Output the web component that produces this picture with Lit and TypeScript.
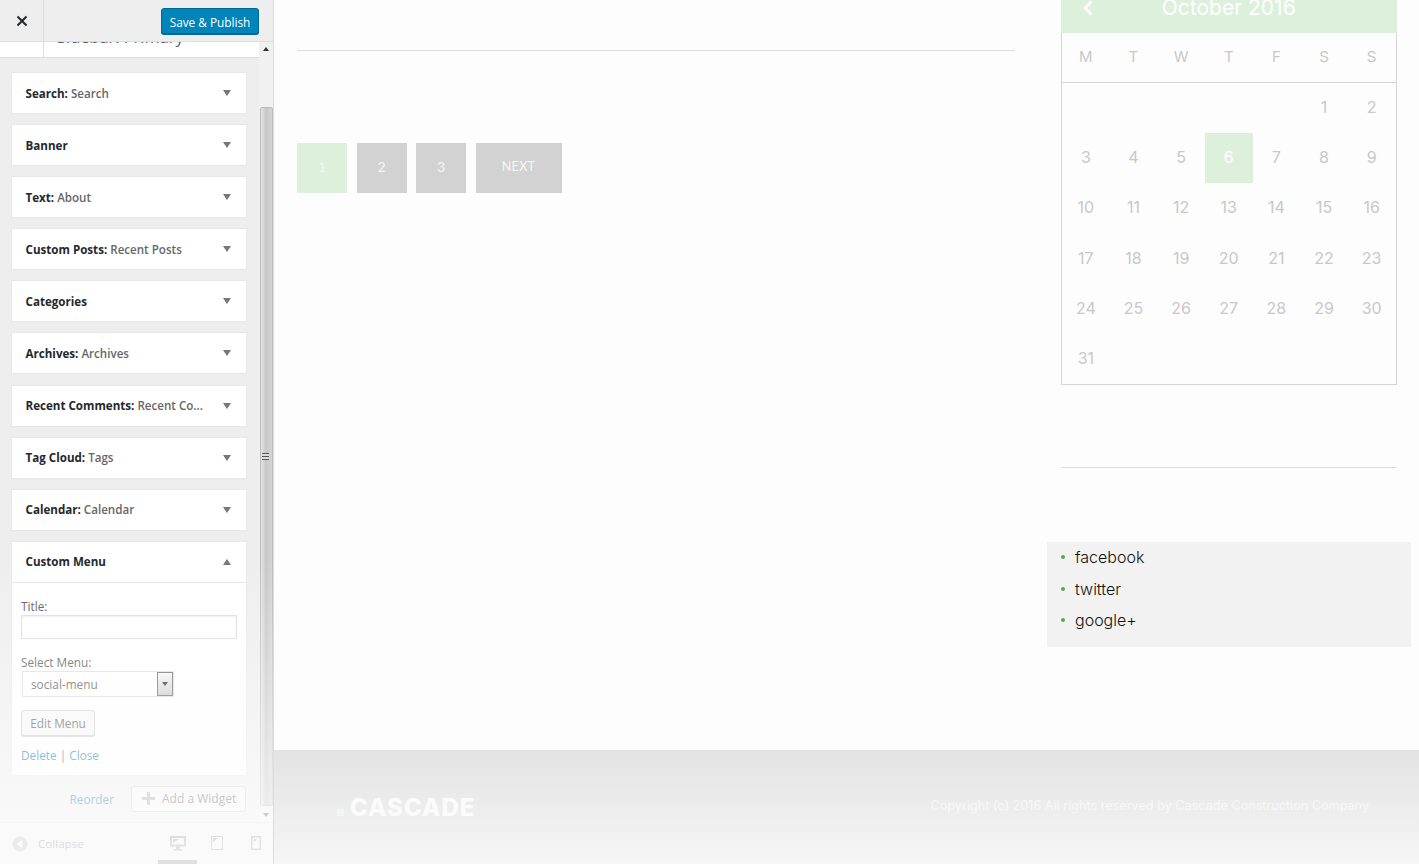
import {html, css, LitElement} from 'lit';
import {customElement} from 'lit/decorators.js';

const WIDGETS: [string, string][] = [
    ['Search', 'Search'],
    ['Banner', ''],
    ['Text', 'About'],
    ['Custom Posts', 'Recent Posts'],
    ['Categories', ''],
    ['Archives', 'Archives'],
    ['Recent Comments', 'Recent Co...'],
    ['Tag Cloud', 'Tags'],
    ['Calendar', 'Calendar'],
];

const WEEKDAYS = ['M', 'T', 'W', 'T', 'F', 'S', 'S'];

@customElement('app-root')
export class AppRoot extends LitElement {
    renderWidget([name, title]: [string, string]) {
        return html`
            <div class="widget">
                <div class="widget-head">
                    <span class="widget-name">${name}${title ? html`: <span class="widget-title">${title}</span>` : ''}</span>
                    <span class="caret down"></span>
                </div>
            </div>
        `;
    }

    renderMenuWidget() {
        return html`
            <div class="widget">
                <div class="widget-head open">
                    <span class="widget-name">Custom Menu</span>
                    <span class="caret up"></span>
                </div>
                <div class="widget-form">
                    <div class="label">Title:</div>
                    <div class="input"></div>
                    <div class="label select-label">Select Menu:</div>
                    <div class="select">
                        <span class="select-value">social-menu</span>
                        <span class="select-arrow"><span class="caret tiny"></span></span>
                    </div>
                    <div class="edit-btn">Edit Menu</div>
                    <div class="form-links"><span class="link">Delete</span> | <span class="link">Close</span></div>
                </div>
            </div>
        `;
    }

    renderSidebar() {
        return html`
            <aside class="sidebar">
                <header class="side-head">
                    <div class="close">
                        <svg width="12" height="12" viewBox="0 0 12 12"><path d="M1.5 1.5l9 9M10.5 1.5l-9 9" stroke="#23282d" stroke-width="2" fill="none"/></svg>
                    </div>
                    <div class="save">Save &amp; Publish</div>
                </header>
                <div class="side-mid">
                    <div class="side-list">
                        <div class="stub">
                            <div class="stub-back"></div>
                            <div class="stub-title">Sidebar: Primary</div>
                        </div>
                        <div class="widgets">
                            ${WIDGETS.map((w) => this.renderWidget(w))}
                            ${this.renderMenuWidget()}
                        </div>
                        <div class="actions">
                            <span class="reorder">Reorder</span>
                            <div class="add">
                                <svg width="13" height="13" viewBox="0 0 13 13"><path d="M6.5 0v13M0 6.5h13" stroke="#a0a5aa" stroke-width="3" fill="none"/></svg>
                                Add a Widget
                            </div>
                        </div>
                    </div>
                    <div class="scrollbar">
                        <span class="sb-arrow sb-up"></span>
                        <div class="sb-thumb">
                            <span class="grip"></span>
                        </div>
                        <span class="sb-arrow sb-down"></span>
                    </div>
                </div>
                <footer class="side-foot">
                    <svg class="collapse-icon" width="16" height="16" viewBox="0 0 16 16"><circle cx="8" cy="8" r="7.5" fill="#a0a5aa"/><path d="M10.5 3.8v8.4L4.5 8z" fill="#fff"/></svg>
                    <span class="collapse">Collapse</span>
                    <div class="devices">
                        <div class="device active">
                            <svg width="16" height="16" viewBox="0 0 16 16"><path d="M0 1h16v10.500H0zM2 3v6.500h12V3zM6 11.500h4V14h2.500v1.500h-9V14H6z" fill="#72777c" fill-rule="evenodd"/><path d="M3 8V4h6z" fill="#72777c"/></svg>
                        </div>
                        <div class="device">
                            <svg width="14" height="16" viewBox="0 0 14 16"><path d="M1 1h12v14H1zM2 2v12h10V2z" fill="#72777c" fill-rule="evenodd"/><path d="M3 7V3h5z" fill="#72777c"/></svg>
                        </div>
                        <div class="device">
                            <svg width="10" height="16" viewBox="0 0 10 16"><path d="M0 1h10v14H0zM1.500 2.500v11h7v-11z" fill="#72777c" fill-rule="evenodd"/><path d="M3 7V4h3z" fill="#72777c"/></svg>
                        </div>
                    </div>
                </footer>
                <div class="fade"></div>
            </aside>
        `;
    }

    renderCalendar() {
        const cells: (number | null)[] = [null, null, null, null, null];
        for (let d = 1; d <= 31; d++) cells.push(d);
        return html`
            <div class="cal">
                <div class="cal-head">
                    <svg class="cal-prev" width="10" height="16" viewBox="0 0 10 16"><path d="M8.500 1.500L2 8l6.500 6.500" stroke="#fff" stroke-width="2.500" fill="none"/></svg>
                    <span>October 2016</span>
                </div>
                <div class="cal-week">${WEEKDAYS.map((d) => html`<span>${d}</span>`)}</div>
                <div class="cal-days">
                    ${cells.map((d) => html`<span class=${d === 6 ? 'today' : ''}>${d ?? ''}</span>`)}
                </div>
            </div>
        `;
    }

    render() {
        return html`
            ${this.renderSidebar()}
            <main class="main">
                <div class="content">
                    <section class="posts">
                        <div class="rule"></div>
                        <nav class="pager">
                            <span class="page current">1</span>
                            <span class="page">2</span>
                            <span class="page">3</span>
                            <span class="page next">NEXT</span>
                        </nav>
                    </section>
                    <section class="rail">
                        <div class="rail-inner">
                            ${this.renderCalendar()}
                            <div class="rule rail-rule"></div>
                        </div>
                        <ul class="social">
                            <li>facebook</li>
                            <li>twitter</li>
                            <li>google+</li>
                        </ul>
                    </section>
                </div>
                <footer class="foot">
                    <div class="logo"><span class="logo-dot"></span>CASCADE</div>
                    <div class="copy">Copyright (c) 2016 All rights reserved by Cascade Construction Company</div>
                </footer>
            </main>
        `;
    }

    static styles = [
        css`
            :host {
                display: grid;
                grid-template-columns: 274px 1fr;
                width: 100%;
                height: 864px;
                overflow: hidden;
                background: #fdfdfd;
                font-family: "Open Sans", sans-serif;
            }

            .sidebar {
                position: relative;
                display: flex;
                flex-direction: column;
                height: 864px;
                background: #eee;
                border-right: 1px solid #ddd;
                box-sizing: border-box;
                overflow: hidden;
            }

            .fade {
                position: absolute;
                left: 0;
                right: 0;
                top: 560px;
                bottom: 0;
                background: linear-gradient(rgba(253, 253, 253, 0), rgba(253, 253, 253, 0.85));
                pointer-events: none;
            }

            .side-head {
                flex: none;
                display: flex;
                align-items: center;
                justify-content: space-between;
                height: 42px;
                box-sizing: border-box;
                padding-right: 14px;
                background: #eee;
                border-bottom: 1px solid #ddd;
            }

            .close {
                display: flex;
                align-items: center;
                justify-content: center;
                width: 44px;
                height: 41px;
                box-sizing: border-box;
                border-right: 1px solid #ddd;
            }

            .save {
                width: 98px;
                height: 26px;
                margin-top: 1px;
                box-sizing: border-box;
                border: 1px solid #006799;
                border-radius: 3px;
                background: #0085ba;
                box-shadow: 0 1px 0 #006799;
                color: #fff;
                font-size: 11.8px;
                line-height: 26px;
                text-align: center;
            }

            .side-mid {
                flex: 1;
                display: flex;
                min-height: 0;
            }

            .side-list {
                flex: 1;
                min-width: 0;
            }

            .stub {
                display: flex;
                height: 15px;
                background: #fff;
                border-bottom: 1px solid #ddd;
                overflow: hidden;
            }

            .stub-back {
                flex: none;
                width: 43px;
                border-right: 1px solid #ddd;
            }

            .stub-title {
                margin-top: -17px;
                padding-left: 13px;
                color: #555d66;
                font-size: 16.4px;
                line-height: 24px;
                white-space: nowrap;
            }

            .widgets {
                display: flex;
                flex-direction: column;
                gap: 12.100px;
                padding: 15px 13px 0 12px;
            }

            .widget {
                background: #fff;
                box-shadow: 0 0 0 1px #e8e8e8, 0 1px 1px rgba(0, 0, 0, 0.06);
            }

            .widget-head {
                display: flex;
                align-items: center;
                justify-content: space-between;
                height: 40px;
                padding: 0 15px 0 13.500px;
            }

            .widget-head.open {
                border-bottom: 1px solid #e5e5e5;
            }

            .widget-name {
                color: #23282d;
                font-size: 11.6px;
                font-weight: 700;
                white-space: nowrap;
            }

            .widget-title {
                color: #666;
                font-weight: 600;
            }

            .caret {
                display: block;
                width: 0;
                height: 0;
                border-left: 4px solid transparent;
                border-right: 4px solid transparent;
            }

            .caret.down {
                border-top: 6px solid #72777c;
            }

            .caret.up {
                border-bottom: 6px solid #72777c;
            }

            .caret.tiny {
                border-left-width: 3px;
                border-right-width: 3px;
                border-top: 4px solid #222;
            }

            .widget-form {
                padding: 15px 9px 0;
                height: 192px;
                box-sizing: border-box;
                font-size: 11.8px;
                color: #555;
            }

            .label {
                line-height: 16px;
            }

            .input {
                height: 24px;
                margin-top: 1px;
                box-sizing: border-box;
                border: 1px solid #ddd;
                box-shadow: inset 0 1px 2px rgba(0, 0, 0, 0.07);
            }

            .select-label {
                margin-top: 15px;
            }

            .select {
                display: flex;
                justify-content: space-between;
                width: 152px;
                height: 26px;
                margin: 1px 0 0 1px;
                box-sizing: border-box;
                border: 1px solid #ddd;
            }

            .select-value {
                padding-left: 8px;
                line-height: 25px;
            }

            .select-arrow {
                display: flex;
                align-items: center;
                justify-content: center;
                width: 16px;
                height: 24px;
                box-sizing: border-box;
                border: 1px solid #666;
                background: linear-gradient(#f6f6f6, #c9c9c9);
            }

            .edit-btn {
                width: 74px;
                height: 26px;
                margin-top: 13px;
                box-sizing: border-box;
                border: 1px solid #ccc;
                border-radius: 3px;
                background: #f7f7f7;
                box-shadow: 0 1px 0 #ccc;
                line-height: 25px;
                text-align: center;
            }

            .form-links {
                margin-top: 11px;
                line-height: 16px;
            }

            .link {
                color: #0073aa;
            }

            .actions {
                display: flex;
                align-items: center;
                justify-content: flex-end;
                gap: 17px;
                padding: 11px 13px 0 0;
            }

            .reorder {
                color: #0073aa;
                font-size: 11.8px;
            }

            .add {
                display: flex;
                align-items: center;
                gap: 7px;
                width: 115px;
                height: 26px;
                padding-left: 10px;
                box-sizing: border-box;
                border: 1px solid #ccc;
                border-radius: 3px;
                background: #f7f7f7;
                color: #555;
                font-size: 12px;
            }

            .scrollbar {
                flex: none;
                display: flex;
                flex-direction: column;
                align-items: center;
                width: 14px;
                background: #f1f1f1;
            }

            .sb-arrow {
                flex: none;
                width: 0;
                height: 0;
                border-left: 3px solid transparent;
                border-right: 3px solid transparent;
            }

            .sb-up {
                margin-top: 5px;
                border-bottom: 4px solid #333;
            }

            .sb-down {
                margin-top: 7px;
                border-top: 4px solid #555;
            }

            .sb-thumb {
                display: flex;
                align-items: center;
                justify-content: center;
                width: 13px;
                height: 699px;
                margin-top: 56px;
                box-sizing: border-box;
                border: 1px solid #bbb;
                border-radius: 2px;
                background: linear-gradient(90deg, #e6e6e6, #c6c6c6 45%, #d6d6d6);
            }

            .grip {
                display: block;
                width: 7px;
                height: 7px;
                margin-left: -1px;
                background: repeating-linear-gradient(#555 0 1px, #ddd 1px 3px);
            }

            .side-foot {
                flex: none;
                display: flex;
                align-items: center;
                height: 42px;
                padding-left: 12px;
                box-sizing: border-box;
                border-top: 1px solid #ddd;
                background: #eee;
            }

            .collapse {
                margin-left: 10px;
                color: #555;
                font-size: 11.6px;
            }

            .devices {
                display: flex;
                align-items: flex-start;
                margin-left: auto;
                margin-right: -2px;
                height: 41px;
            }

            .device {
                display: flex;
                align-items: center;
                justify-content: center;
                width: 39px;
                height: 41px;
                box-sizing: border-box;
                border-bottom: 4px solid transparent;
                padding-top: 3px;
            }

            .device.active {
                border-bottom-color: #444;
            }

            .main {
                display: flex;
                flex-direction: column;
                height: 864px;
                min-width: 0;
            }

            .content {
                flex: 1;
                display: flex;
                justify-content: space-between;
            }

            .posts {
                width: 718px;
                margin-left: 23px;
                padding-top: 50px;
            }

            .rule {
                height: 1px;
                background: #dcdcdc;
            }

            .pager {
                display: flex;
                gap: 9.500px;
                margin-top: 92px;
            }

            .page {
                width: 50px;
                height: 50px;
                background: #d2d2d2;
                color: #f6f6f6;
                font-family: Lato, sans-serif;
                font-size: 14px;
                line-height: 47px;
                text-align: center;
            }

            .page.current {
                background: #ddf0dc;
            }

            .page.next {
                width: 86px;
                font-size: 12.5px;
                letter-spacing: 0.3px;
            }

            .rail {
                width: 364px;
                margin-right: 8px;
                font-family: Inter, sans-serif;
            }

            .rail-inner {
                padding: 0 14.500px 0 14px;
            }

            .cal {
                box-sizing: border-box;
                height: 385px;
                border: 1px solid #d4d4d4;
                border-top: 0;
            }

            .cal-head {
                position: relative;
                display: flex;
                align-items: flex-end;
                justify-content: center;
                height: 33px;
                margin: 0 -1px;
                padding-bottom: 14px;
                box-sizing: border-box;
                overflow: hidden;
                background: #ddf0dc;
                color: #fff;
                font-size: 21px;
                line-height: 22px;
            }

            .cal-prev {
                position: absolute;
                left: 22px;
                top: 0;
            }

            .cal-week {
                display: grid;
                grid-template-columns: repeat(7, 1fr);
                height: 49px;
                border-bottom: 1px solid #d4d4d4;
                color: #c8c8c8;
                font-size: 15px;
                line-height: 48px;
                text-align: center;
            }

            .cal-days {
                display: grid;
                grid-template-columns: repeat(7, 1fr);
                grid-auto-rows: 50.200px;
                color: #c8c8c8;
                font-size: 16px;
                line-height: 48px;
                text-align: center;
            }

            .cal-days .today {
                background: #ddf0dc;
                color: #fff;
            }

            .rail-rule {
                margin-top: 82px;
            }

            .social {
                height: 105px;
                margin: 74px 0 0;
                padding: 0 0 0 14px;
                box-sizing: border-box;
                background: #f2f2f2;
                list-style: none;
                color: #111;
                font-size: 16px;
                font-weight: 300;
            }

            .social li {
                display: flex;
                align-items: center;
                gap: 10px;
                height: 31.500px;
                padding-bottom: 1px;
                box-sizing: border-box;
            }

            .social li::before {
                content: '';
                width: 4px;
                height: 4px;
                border-radius: 50%;
                background: #4caf50;
            }

            .foot {
                flex: none;
                display: flex;
                align-items: center;
                justify-content: space-between;
                height: 114px;
                padding: 0 50px 0 63px;
                box-sizing: border-box;
                background: linear-gradient(#e3e3e3, #f6f6f6);
            }

            .logo {
                display: flex;
                align-items: baseline;
                gap: 6px;
                color: #fbfbfb;
                font-family: Inter, sans-serif;
                font-size: 24px;
                font-weight: 800;
                letter-spacing: 1px;
            }

            .logo-dot {
                width: 7px;
                height: 7px;
                background: #eef8ee;
            }

            .copy {
                margin-bottom: 4px;
                color: #f8f8f8;
                font-family: Inter, sans-serif;
                font-size: 12.650px;
            }
        `
    ];
}
